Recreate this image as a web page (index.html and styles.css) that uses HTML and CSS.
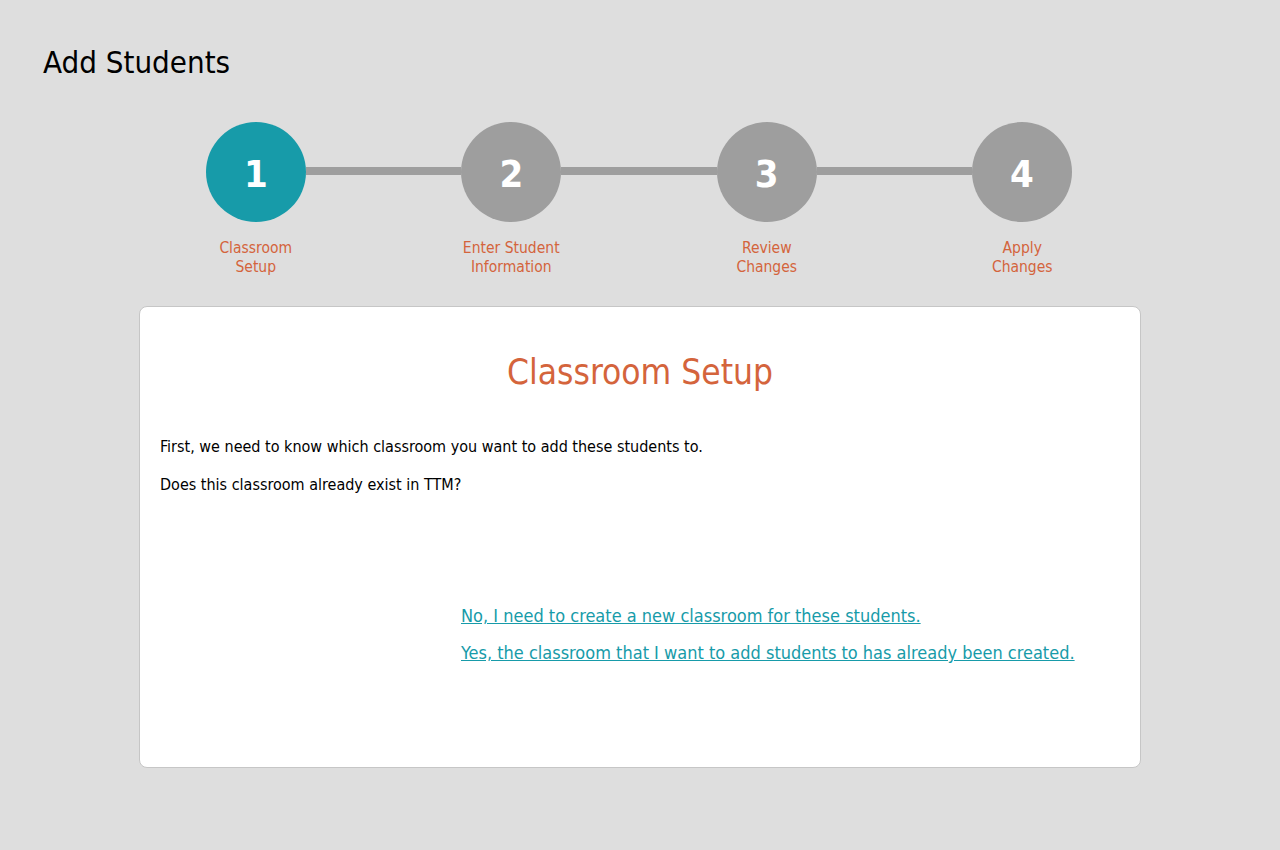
FILE: index.html
```html
<!DOCTYPE html>
<html>
<head>
<meta charset="utf-8">
<title>Add Students</title>
<link rel="stylesheet" href="styles.css">
</head>
<body>
<div class="page">
  <h1 class="page-title">Add Students</h1>

  <div class="wizard">
    <div class="track">
      <div class="step-circle active">1</div>
      <div class="step-bar"></div>
      <div class="step-circle">2</div>
      <div class="step-bar"></div>
      <div class="step-circle">3</div>
      <div class="step-bar"></div>
      <div class="step-circle">4</div>
    </div>
    <div class="labels">
      <div class="step-label">Classroom<br>Setup</div>
      <div class="step-label">Enter Student<br>Information</div>
      <div class="step-label">Review<br>Changes</div>
      <div class="step-label">Apply<br>Changes</div>
    </div>
  </div>

  <div class="card">
    <h2 class="card-title">Classroom Setup</h2>
    <p class="card-text">First, we need to know which classroom you want to add these students to.</p>
    <p class="card-text">Does this classroom already exist in TTM?</p>
    <div class="choices">
      <div class="choices-spacer"></div>
      <div class="choices-list">
        <a class="choice" href="#">No, I need to create a new classroom for these students.</a>
        <a class="choice" href="#">Yes, the classroom that I want to add students to has already been created.</a>
      </div>
    </div>
  </div>
</div>
</body>
</html>
```
FILE: styles.css
```css
html, body {
  margin: 0;
  padding: 0;
  background: #dedede;
}
body {
  font-family: "DejaVu Sans Condensed", "DejaVu Sans", sans-serif;
  color: #000;
  width: 1280px;
  height: 850px;
  overflow: hidden;
}
.page {
  padding: 40px 0 0 0;
}
.page-title {
  margin: 0 0 0 43px;
  font-size: 31px;
  font-weight: normal;
  line-height: 44px;
  height: 44px;
}
.wizard {
  margin-top: 38px;
  display: flex;
  flex-direction: column;
  align-items: center;
}
.track {
  display: flex;
  align-items: center;
  width: 866px;
  margin-left: -2px;
}
.step-circle {
  width: 100px;
  height: 100px;
  border-radius: 50%;
  background: #9e9e9e;
  color: #fff;
  font-weight: bold;
  font-size: 38px;
  display: flex;
  align-items: center;
  justify-content: center;
  flex: none;
  line-height: 1;
  padding-top: 4px;
  box-sizing: border-box;
}
.step-circle.active {
  background: #179ba9;
}
.step-bar {
  flex: 1;
  height: 8px;
  margin-top: -2px;
  background: #9e9e9e;
}
.labels {
  display: grid;
  grid-template-columns: repeat(4, 255.5px);
  margin-top: 17px;
  margin-left: -2px;
}
.step-label {
  text-align: center;
  color: #d4643c;
  font-size: 15.5px;
  line-height: 19px;
}
.card {
  margin: 29px 0 0 139px;
  width: 1002px;
  height: 462px;
  box-sizing: border-box;
  background: #fff;
  border: 1px solid #c6c6c6;
  border-radius: 8px;
  padding: 0 20px;
}
.card-title {
  margin: 40px 0 0 0;
  text-align: center;
  color: #d4643c;
  font-weight: normal;
  font-size: 35px;
  line-height: 50px;
}
.card-text {
  margin: 0;
  font-size: 16px;
  line-height: 20px;
}
.card-title + .card-text {
  margin-top: 40px;
}
.card-text + .card-text {
  margin-top: 18px;
}
.choices {
  display: flex;
  margin-top: 109px;
}
.choices-spacer {
  width: 301px;
  flex: none;
}
.choices-list {
  display: flex;
  flex-direction: column;
  gap: 13px;
}
.choice {
  color: #179ba9;
  font-size: 18px;
  line-height: 24px;
  text-decoration: underline;
}
```
